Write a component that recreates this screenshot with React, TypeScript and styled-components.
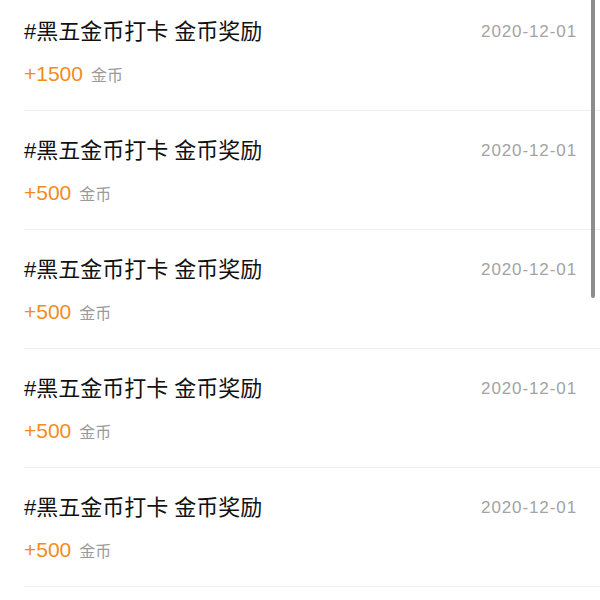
import { FC, ReactElement } from "react";
import styled, { createGlobalStyle } from "styled-components";

const GlobalStyle = createGlobalStyle`
  html, body {
    margin: 0;
    padding: 0;
    background: #fff;
    overflow: hidden;
  }
  body {
    font-family: "Liberation Sans", "Noto Sans CJK SC", sans-serif;
  }
`;

const Page = styled.div`
  position: relative;
  width: 600px;
  height: 600px;
  overflow: hidden;
  background: #fff;
`;

// list is scrolled down by a few pixels in the screenshot
const List = styled.ul`
  list-style: none;
  margin: -8px 0 0 0;
  padding: 0;
`;

const Row = styled.li`
  box-sizing: border-box;
  height: 119px;
  margin-left: 24px;
  padding: 25px 24px 0 0;
  border-bottom: 1px solid #f0f0f0;
`;

const TopLine = styled.div`
  display: flex;
  align-items: center;
  justify-content: space-between;
  height: 30px;
`;

const Title = styled.span`
  font-size: 22px;
  line-height: 30px;
  color: #111;
  font-family: "Liberation Sans", "Noto Sans CJK SC", sans-serif;
`;

const DateText = styled.span`
  font-size: 17px;
  line-height: 30px;
  letter-spacing: 0.9px;
  margin-right: -1px;
  color: #a3a3a3;
  font-family: "Liberation Sans", "Noto Sans CJK SC", sans-serif;
`;

const AmountLine = styled.div`
  display: flex;
  align-items: baseline;
  gap: 8px;
  margin-top: 13px;
  height: 28px;
`;

const Amount = styled.span`
  font-size: 21px;
  line-height: 28px;
  color: #f38b1e;
  font-family: "Liberation Sans", "Noto Sans CJK SC", sans-serif;
`;

const Unit = styled.span`
  font-size: 16px;
  color: #9a9a9a;
  font-family: "Noto Sans CJK SC", sans-serif;
`;

const ScrollThumb = styled.div`
  position: absolute;
  top: -6px;
  right: 5px;
  width: 4px;
  height: 304px;
  border-radius: 2px;
  background: #8c8c8c;
`;

const records = [
  { title: "#黑五金币打卡 金币奖励", amount: 1500, date: "2020-12-01" },
  { title: "#黑五金币打卡 金币奖励", amount: 500, date: "2020-12-01" },
  { title: "#黑五金币打卡 金币奖励", amount: 500, date: "2020-12-01" },
  { title: "#黑五金币打卡 金币奖励", amount: 500, date: "2020-12-01" },
  { title: "#黑五金币打卡 金币奖励", amount: 500, date: "2020-12-01" },
];

export const App: FC = (): ReactElement => {
  return (
    <Page>
      <GlobalStyle />
      <List>
        {records.map((r, index) => (
          <Row key={index}>
            <TopLine>
              <Title>{r.title}</Title>
              <DateText>{r.date}</DateText>
            </TopLine>
            <AmountLine>
              <Amount>+{r.amount}</Amount>
              <Unit>金币</Unit>
            </AmountLine>
          </Row>
        ))}
      </List>
      <ScrollThumb />
    </Page>
  );
};

export default App;
